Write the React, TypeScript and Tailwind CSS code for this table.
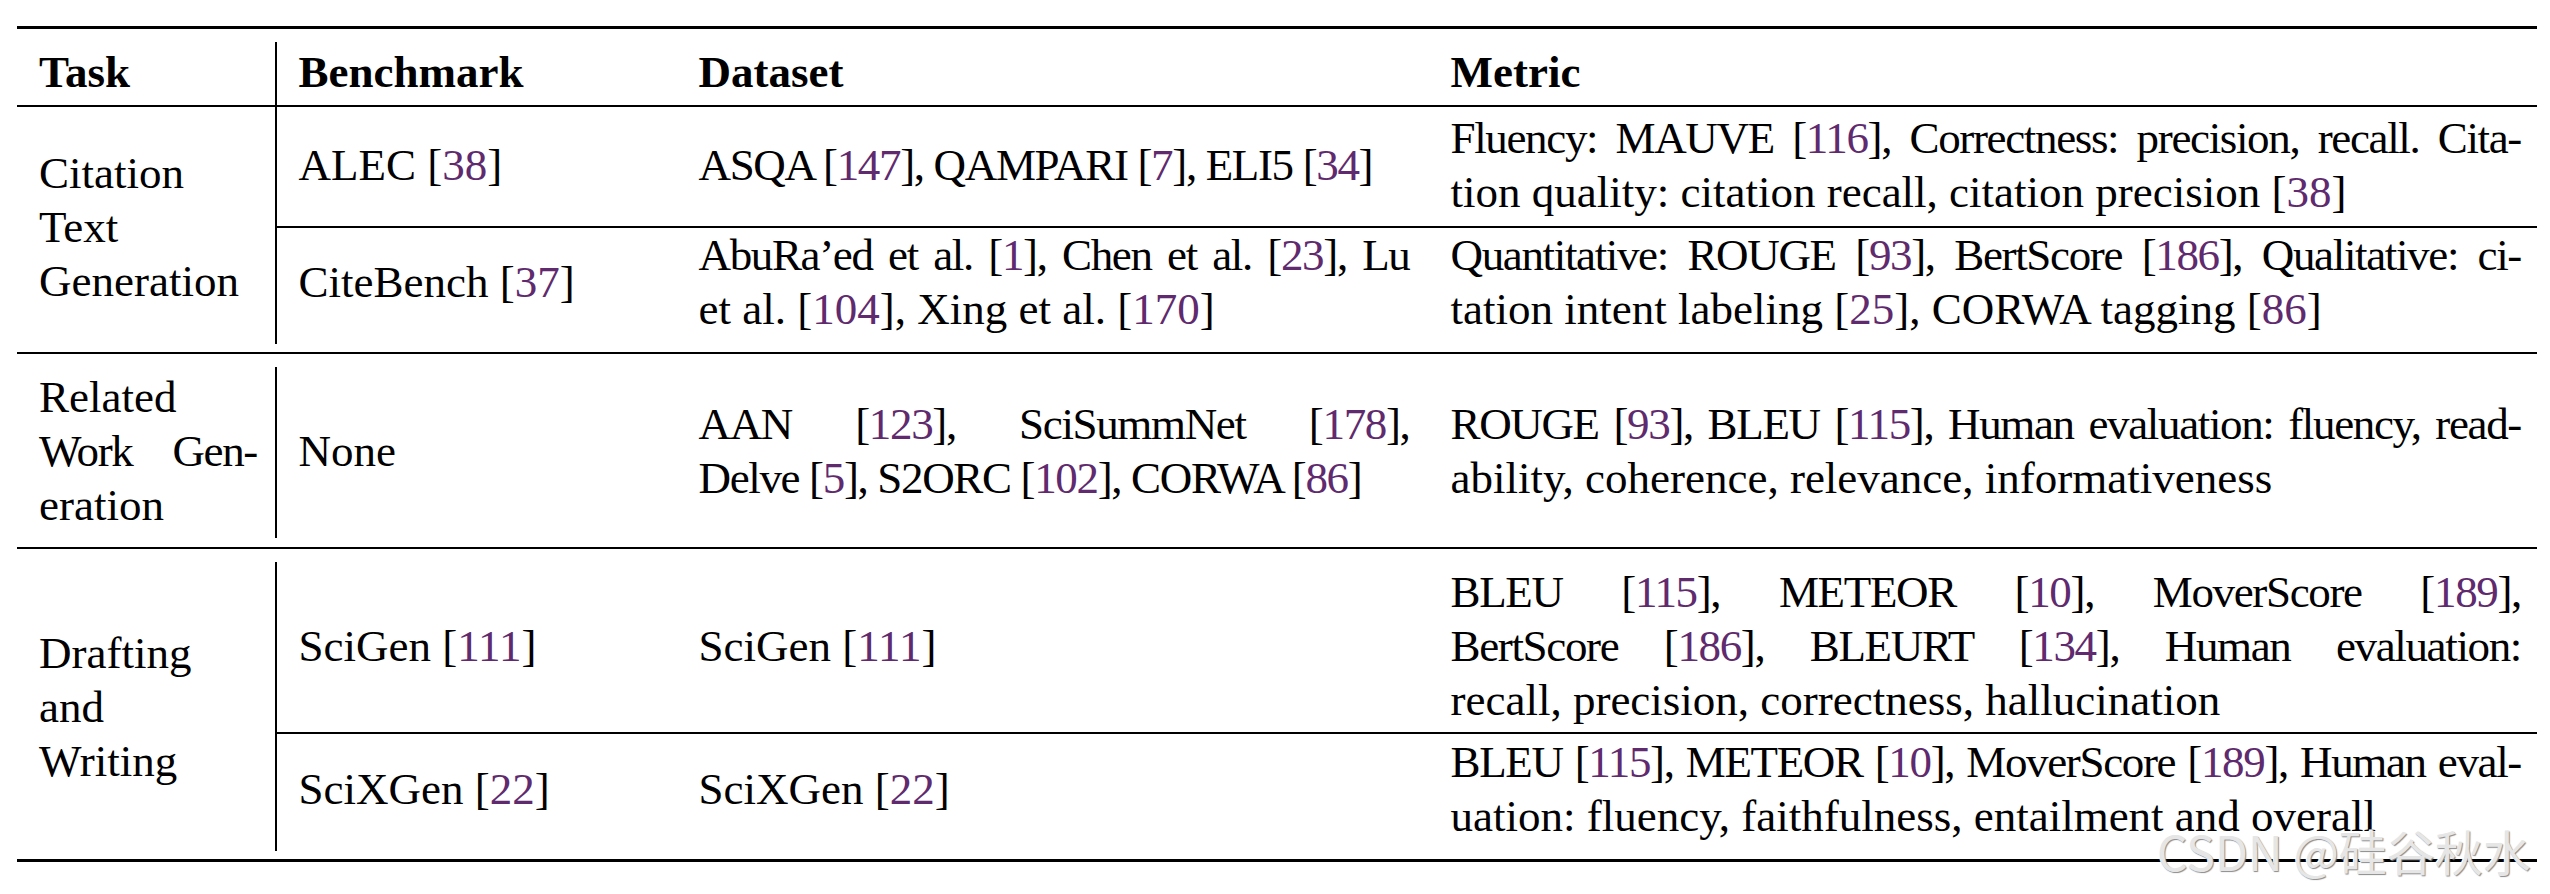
import React from 'react';

// j = justified line (LaTeX full line), t = tighter tracking for cap-heavy lines
type Line = { j?: boolean; t?: boolean; c: React.ReactNode };

// citation number in ACM purple, brackets stay black
const Cite: React.FC<{ n: string }> = ({ n }) => (
  <>
    [<span className="text-[#5f2a6e]">{n}</span>]
  </>
);

const Lines: React.FC<{ lines: Line[] }> = ({ lines }) => (
  <div>
    {lines.map((l, i) => (
      <div
        key={i}
        className={
          l.j
            ? 'whitespace-nowrap tracking-[-0.03em] text-justify [text-align-last:justify]'
            : l.t
              ? 'whitespace-nowrap tracking-[-0.03em]'
              : 'whitespace-nowrap'
        }
      >
        {l.c}
      </div>
    ))}
  </div>
);

const Row: React.FC<{
  pad: string;
  bench: React.ReactNode;
  data: Line[];
  metric: Line[];
}> = ({ pad, bench, data, metric }) => (
  <div className={`flex items-center ${pad}`}>
    <div className="w-[400px] shrink-0 pl-[22px]">{bench}</div>
    <div className="w-[754px] shrink-0 pl-[22px] pr-[21px]">
      <Lines lines={data} />
    </div>
    <div className="flex-1 min-w-0 pl-[20px] pr-[16px]">
      <Lines lines={metric} />
    </div>
  </div>
);

export default function App() {
  return (
    <div className="relative w-[2550px] h-[894px] overflow-hidden bg-white text-black [font-family:'Liberation_Serif',serif] text-[45px] leading-[54px]">
      <div className="ml-[17px] w-[2520px] pt-[26px] flex flex-col">
        {/* top rule */}
        <div className="h-[3px] bg-black" />

        {/* Header */}
        <div className="flex h-[76px] font-bold">
          <div className="w-[258px] shrink-0 pl-[22px] pt-[16px]">Task</div>
          <div className="w-[1.5px] shrink-0 bg-black mt-[13px]" />
          <div className="w-[400px] shrink-0 pl-[22px] pt-[16px]">Benchmark</div>
          <div className="w-[754px] shrink-0 pl-[22px] pt-[16px]">Dataset</div>
          <div className="flex-1 min-w-0 pl-[20px] pt-[16px]">Metric</div>
        </div>
        <div className="h-[2px] bg-black" />

        {/* Citation Text Generation */}
        <div className="flex h-[245px]">
          <div className="w-[258px] shrink-0 pl-[22px] pb-[5px] flex items-center">
            <Lines lines={[{ c: 'Citation' }, { c: 'Text' }, { c: 'Generation' }]} />
          </div>
          <div className="w-[1.5px] shrink-0 bg-black mb-[8px]" />
          <div className="flex-1 min-w-0 flex flex-col">
            <Row
              pad="h-[119px] pt-[4px] pb-[7px]"
              bench={<>ALEC <Cite n="38" /></>}
              data={[
                { t: true, c: <>ASQA <Cite n="147" />, QAMPARI <Cite n="7" />, ELI5 <Cite n="34" /></> },
              ]}
              metric={[
                { j: true, c: <>Fluency: MAUVE <Cite n="116" />, Correctness: precision, recall. Cita-</> },
                { c: <>tion quality: citation recall, citation precision <Cite n="38" /></> },
              ]}
            />
            <div className="h-[2px] bg-black" />
            <Row
              pad="h-[124px] pb-[16px]"
              bench={<>CiteBench <Cite n="37" /></>}
              data={[
                { j: true, c: <>AbuRa’ed et al. <Cite n="1" />, Chen et al. <Cite n="23" />, Lu</> },
                { c: <>et al. <Cite n="104" />, Xing et al. <Cite n="170" /></> },
              ]}
              metric={[
                { j: true, c: <>Quantitative: ROUGE <Cite n="93" />, BertScore <Cite n="186" />, Qualitative: ci-</> },
                { c: <>tation intent labeling <Cite n="25" />, CORWA tagging <Cite n="86" /></> },
              ]}
            />
          </div>
        </div>
        <div className="h-[2px] bg-black" />

        {/* Related Work Generation */}
        <div className="flex h-[193px]">
          <div className="w-[258px] shrink-0 pl-[22px] pr-[18px] flex items-center">
            <div className="w-full">
              <Lines lines={[{ c: 'Related' }, { j: true, c: 'Work Gen-' }, { c: 'eration' }]} />
            </div>
          </div>
          <div className="w-[1.5px] shrink-0 bg-black mt-[13px] mb-[9px]" />
          <div className="flex-1 min-w-0 flex flex-col justify-center">
            <Row
              pad=""
              bench="None"
              data={[
                { j: true, c: <>AAN <Cite n="123" />, SciSummNet <Cite n="178" />,</> },
                { t: true, c: <>Delve <Cite n="5" />, S2ORC <Cite n="102" />, CORWA <Cite n="86" /></> },
              ]}
              metric={[
                { j: true, c: <>ROUGE <Cite n="93" />, BLEU <Cite n="115" />, Human evaluation: fluency, read-</> },
                { c: 'ability, coherence, relevance, informativeness' },
              ]}
            />
          </div>
        </div>
        <div className="h-[2px] bg-black" />

        {/* Drafting and Writing */}
        <div className="flex h-[310px]">
          <div className="w-[258px] shrink-0 pl-[22px] pt-[6px] flex items-center">
            <Lines lines={[{ c: 'Drafting' }, { c: 'and' }, { c: 'Writing' }]} />
          </div>
          <div className="w-[1.5px] shrink-0 bg-black mt-[13px] mb-[8px]" />
          <div className="flex-1 min-w-0 flex flex-col">
            <Row
              pad="h-[183px] pt-[16px] pb-[5px]"
              bench={<>SciGen <Cite n="111" /></>}
              data={[{ c: <>SciGen <Cite n="111" /></> }]}
              metric={[
                { j: true, c: <>BLEU <Cite n="115" />, METEOR <Cite n="10" />, MoverScore <Cite n="189" />,</> },
                { j: true, c: <>BertScore <Cite n="186" />, BLEURT <Cite n="134" />, Human evaluation:</> },
                { c: 'recall, precision, correctness, hallucination' },
              ]}
            />
            <div className="h-[2px] bg-black" />
            <Row
              pad="h-[125px] pt-[1px] pb-[16px]"
              bench={<>SciXGen <Cite n="22" /></>}
              data={[{ c: <>SciXGen <Cite n="22" /></> }]}
              metric={[
                { j: true, c: <>BLEU <Cite n="115" />, METEOR <Cite n="10" />, MoverScore <Cite n="189" />, Human eval-</> },
                { c: 'uation: fluency, faithfulness, entailment and overall' },
              ]}
            />
          </div>
        </div>
        {/* bottom rule */}
        <div className="h-[3px] bg-black" />
      </div>

      {/* watermark */}
      <div className="absolute left-[2157px] top-[822px] whitespace-nowrap [font-family:'Noto_Sans_CJK_SC',sans-serif] text-[48px] leading-[56px] text-[#e6e6e6] [text-shadow:1px_1px_1px_#8a8a8a,-1px_-1px_0_#ffffff]">
        CSDN @硅谷秋水
      </div>
    </div>
  );
}
